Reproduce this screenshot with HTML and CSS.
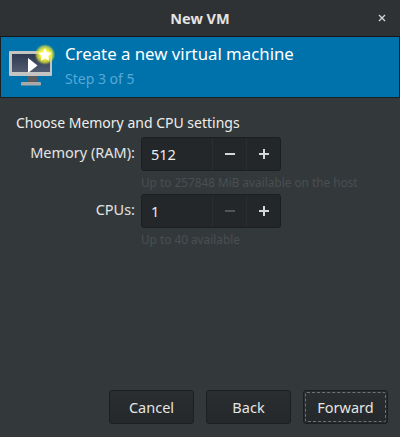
FILE: index.html
```html
<!DOCTYPE html>
<html lang="en">
<head>
    <meta charset="UTF-8">
    <title>New VM</title>
    <link rel="stylesheet" href="styles.css">
</head>
<body>
    <div class="window">
        <div class="titlebar">
            <span class="title">New VM</span>
            <svg class="close" width="8" height="8" viewBox="0 0 8 8"><path d="M1 1l6 6M7 1L1 7" stroke="#d8d8d8" stroke-width="1.3" fill="none"/></svg>
        </div>
        <div class="banner">
            <svg class="banner-icon" width="50" height="46" viewBox="0 0 50 46">
                <defs>
                    <radialGradient id="glow">
                        <stop offset="0.45" stop-color="#f6f43a"/>
                        <stop offset="0.75" stop-color="#e8e83a" stop-opacity="0.7"/>
                        <stop offset="1" stop-color="#c8d83a" stop-opacity="0"/>
                    </radialGradient>
                    <linearGradient id="screen" x1="0" y1="0" x2="0" y2="1">
                        <stop offset="0" stop-color="#2f3a50"/>
                        <stop offset="1" stop-color="#505a70"/>
                    </linearGradient>
                </defs>
                <rect x="0" y="10" width="43" height="25" rx="1" fill="#c4c4c2"/>
                <rect x="3" y="13" width="38" height="18" fill="url(#screen)"/>
                <rect x="18" y="35" width="10" height="6" fill="#5c5c5c"/>
                <rect x="12" y="41" width="20" height="3.500" rx="1" fill="#a9a9a7"/>
                <path d="M19 17L28.500 24.500 19 32z" fill="#fff"/>
                <circle cx="36" cy="13.500" r="10.500" fill="url(#glow)"/>
                <path d="M36 7l2 4.300 4.700.6-3.400 3.200.9 4.700-4.200-2.300-4.200 2.300.9-4.700-3.400-3.200 4.700-.6z" fill="#fff"/>
            </svg>
            <div class="banner-text">
                <div class="banner-title">Create a new virtual machine</div>
                <div class="banner-step">Step 3 of 5</div>
            </div>
        </div>
        <div class="content">
            <div class="section-label">Choose Memory and CPU settings</div>
            <div class="form-grid">
                <label class="field-label">Memory (RAM):</label>
                <div class="spinner">
                    <span class="spinner-value">512</span>
                    <span class="spinner-btn"><svg width="12" height="12" viewBox="0 0 12 12"><rect x="1" y="5" width="10" height="2" fill="#d6d6d6"/></svg></span>
                    <span class="spinner-btn"><svg width="12" height="12" viewBox="0 0 12 12"><path d="M1 5h4V1h2v4h4v2H7v4H5V7H1z" fill="#d6d6d6"/></svg></span>
                </div>
                <div class="hint">Up to 257848 MiB available on the host</div>
                <label class="field-label">CPUs:</label>
                <div class="spinner">
                    <span class="spinner-value">1</span>
                    <span class="spinner-btn"><svg width="12" height="12" viewBox="0 0 12 12"><rect x="1" y="5" width="10" height="2" fill="#505558"/></svg></span>
                    <span class="spinner-btn"><svg width="12" height="12" viewBox="0 0 12 12"><path d="M1 5h4V1h2v4h4v2H7v4H5V7H1z" fill="#d6d6d6"/></svg></span>
                </div>
                <div class="hint">Up to 40 available</div>
            </div>
        </div>
        <div class="actions">
            <button type="button">Cancel</button>
            <button type="button">Back</button>
            <button type="button" class="focused"><span>Forward</span></button>
        </div>
    </div>
</body>
</html>
```

FILE: styles.css
```css
html, body {
    margin: 0;
    padding: 0;
}
body {
    width: 400px;
    height: 437px;
    overflow: hidden;
    background-color: #33393b;
    font-family: "Noto Sans", sans-serif;
    font-size: 14.5px;
    color: #eeeeec;
}
.window {
    display: flex;
    flex-direction: column;
    height: 437px;
}
.titlebar {
    height: 36px;
    flex: none;
    display: flex;
    align-items: center;
    justify-content: center;
    position: relative;
    background-color: #2e3235;
    border-bottom: 1px solid #141617;
}
.title {
    font-weight: 700;
    font-size: 14.500px;
    color: #e4e4e2;
}
.close {
    position: absolute;
    right: 14px;
    top: 14px;
}
.banner {
    height: 60px;
    flex: none;
    display: flex;
    align-items: flex-start;
    background-color: #0072ab;
    border: 1px solid #1d2022;
    border-top: 0;
    padding-left: 8px;
}
.banner-icon {
    margin-top: 4px;
    flex: none;
}
.banner-text {
    margin-left: 6px;
    padding-top: 5px;
}
.banner-title {
    font-size: 16.800px;
    line-height: 24px;
    color: #ffffff;
}
.banner-step {
    font-size: 14px;
    line-height: 20px;
    margin-top: 3px;
    color: #55a8d8;
}
.content {
    flex: 1;
    padding: 15px 16px 0;
}
.section-label {
    font-size: 14px;
    line-height: 19px;
}
.form-grid {
    display: grid;
    grid-template-columns: 119px 140px;
    column-gap: 6px;
    margin-top: 5px;
}
.field-label {
    height: 34px;
    line-height: 30px;
    text-align: right;
    white-space: nowrap;
    color: #e4e4e2;
}
.spinner {
    height: 34px;
    box-sizing: border-box;
    display: flex;
    background-color: #232729;
    border: 1px solid #1b1f20;
    border-radius: 3px;
}
.spinner-value {
    flex: 1;
    padding-left: 9px;
    line-height: 33px;
    color: #eeeeec;
}
.spinner-btn {
    width: 33px;
    flex: none;
    display: flex;
    align-items: center;
    justify-content: center;
    border-left: 1px solid #2a2e30;
}
.hint {
    grid-column: 2 / 4;
    width: 240px;
    height: 23px;
    line-height: 22px;
    font-size: 11.800px;
    white-space: nowrap;
    color: #494f52;
}
.actions {
    flex: none;
    display: flex;
    justify-content: flex-end;
    gap: 12px;
    padding: 0 12px 13px 0;
}
.actions button {
    width: 85px;
    height: 34px;
    padding: 0;
    font-family: inherit;
    font-size: 14.500px;
    color: #e4e4e2;
    background: linear-gradient(#2a2e31, #24282a);
    border: 1px solid #1b1f20;
    border-radius: 3px;
}
.actions button span {
    display: block;
    margin: 1px;
    line-height: 28px;
    border: 1px dashed #6e7274;
    border-radius: 2px;
}
```
